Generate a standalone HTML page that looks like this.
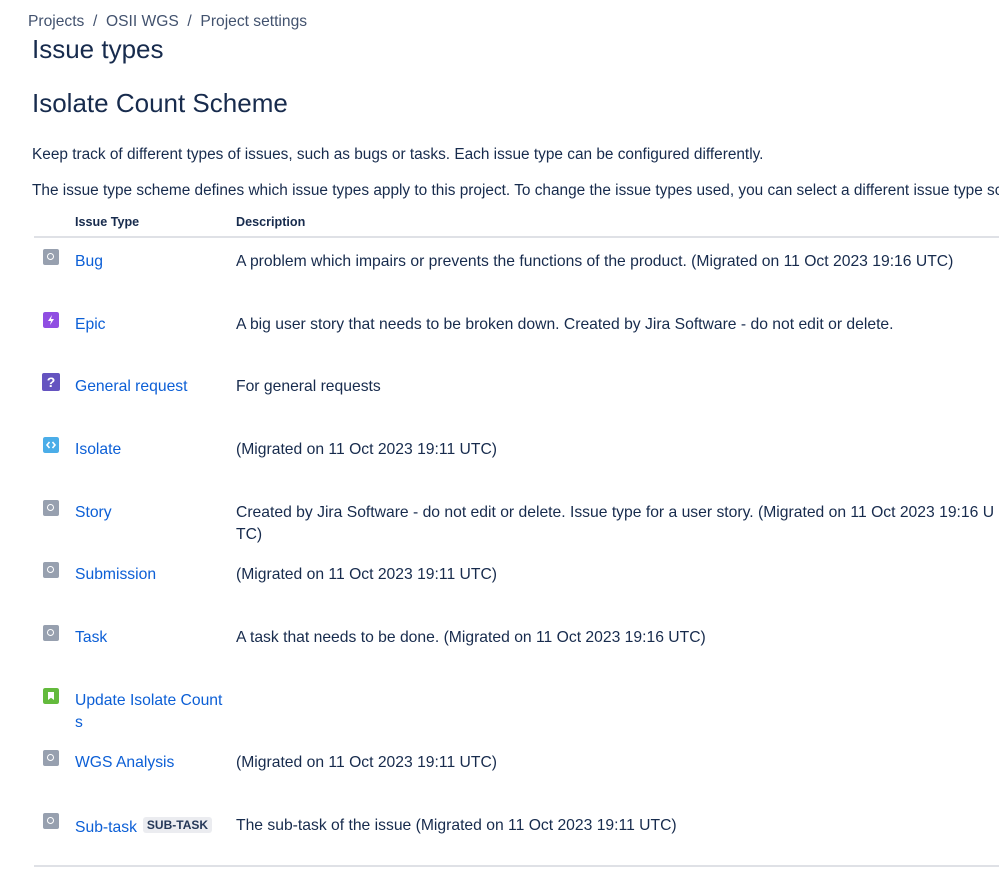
<!DOCTYPE html>
<html><head><meta charset="utf-8"><style>
body{margin:0;width:999px;height:882px;overflow:hidden;background:#fff;font-family:"Liberation Sans",sans-serif;color:#172b4d;position:relative}
.a{position:absolute;white-space:nowrap}
.bc{top:13px;left:28px;font-size:15.6px;color:#42526e}
.h1{top:34px;left:32px;font-size:26px;color:#172b4d}
.h2{top:88px;left:32px;font-size:26px;color:#172b4d}
.p{left:32px;font-size:15.4px;color:#172b4d}
.th{top:215px;font-size:12.6px;font-weight:bold;color:#172b4d}
.ln{position:absolute;left:34px;width:965px;height:2px;background:#dfe1e6}
.n{left:75px;font-size:15.7px;color:#0c5fd6}
.d{left:236px;font-size:15.7px;color:#172b4d}
.ic{position:absolute;left:43px;width:16px;height:16px;border-radius:2px}
.g{background:#97a0af}
.g::after{content:"";position:absolute;left:4px;top:4px;width:5px;height:5px;border:1.5px solid #fff;border-radius:50%}
.tag{display:inline-block;background:#ebecf0;color:#253858;font-size:12px;font-weight:bold;padding:1px 4px;border-radius:3px;margin-left:6px;vertical-align:3px}
</style></head><body>
<div class="a bc">Projects&nbsp;&nbsp;/&nbsp;&nbsp;OSII WGS&nbsp;&nbsp;/&nbsp;&nbsp;Project settings</div>
<div class="a h1">Issue types</div>
<div class="a h2">Isolate Count Scheme</div>
<div class="a p" style="top:146px">Keep track of different types of issues, such as bugs or tasks. Each issue type can be configured differently.</div>
<div class="a p" style="top:182px">The issue type scheme defines which issue types apply to this project. To change the issue types used, you can select a different issue type scheme.</div>
<div class="a th" style="left:75px">Issue Type</div>
<div class="a th" style="left:236px">Description</div>
<div class="ln" style="top:236px"></div>

<div class="ic g" style="top:249px"></div>
<div class="a n" style="top:253px">Bug</div>
<div class="a d" style="top:253px">A problem which impairs or prevents the functions of the product. (Migrated on 11 Oct 2023 19:16 UTC)</div>

<svg class="ic" style="top:312px" width="16" height="16" viewBox="0 0 16 16"><rect width="16" height="16" rx="2" fill="#904ee2"/><path d="M9 3L5 9h3l-1 4 4-6H8z" fill="#fff"/></svg>
<div class="a n" style="top:316px">Epic</div>
<div class="a d" style="top:316px">A big user story that needs to be broken down. Created by Jira Software - do not edit or delete.</div>

<div class="ic" style="top:373px;left:42px;width:18px;height:18px;background:#6554c0;color:#fff;font-weight:bold;font-size:14px;text-align:center;line-height:18px">?</div>
<div class="a n" style="top:378px">General request</div>
<div class="a d" style="top:378px">For general requests</div>

<svg class="ic" style="top:437px" width="16" height="16" viewBox="0 0 16 16"><rect width="16" height="16" rx="2" fill="#4bade8"/><path d="M6.5 5L4 8l2.5 3M9.5 5L12 8l-2.5 3" stroke="#fff" stroke-width="1.6" fill="none"/></svg>
<div class="a n" style="top:441px">Isolate</div>
<div class="a d" style="top:441px">(Migrated on 11 Oct 2023 19:11 UTC)</div>

<div class="ic g" style="top:500px"></div>
<div class="a n" style="top:504px">Story</div>
<div class="a d" style="top:504px;line-height:22px;margin-top:-2px">Created by Jira Software - do not edit or delete. Issue type for a user story. (Migrated on 11 Oct 2023 19:16 U<br>TC)</div>

<div class="ic g" style="top:562px"></div>
<div class="a n" style="top:566px">Submission</div>
<div class="a d" style="top:566px">(Migrated on 11 Oct 2023 19:11 UTC)</div>

<div class="ic g" style="top:625px"></div>
<div class="a n" style="top:629px">Task</div>
<div class="a d" style="top:629px">A task that needs to be done. (Migrated on 11 Oct 2023 19:16 UTC)</div>

<svg class="ic" style="top:688px" width="16" height="16" viewBox="0 0 16 16"><rect width="16" height="16" rx="2" fill="#63ba3c"/><path d="M5 4h6v8l-3-2.2L5 12z" fill="#fff"/></svg>
<div class="a n" style="top:692px;line-height:22px;margin-top:-2px">Update Isolate Count<br>s</div>

<div class="ic g" style="top:750px"></div>
<div class="a n" style="top:754px">WGS Analysis</div>
<div class="a d" style="top:754px">(Migrated on 11 Oct 2023 19:11 UTC)</div>

<div class="ic g" style="top:813px"></div>
<div class="a n" style="top:817px">Sub-task<span class="tag">SUB-TASK</span></div>
<div class="a d" style="top:817px">The sub-task of the issue (Migrated on 11 Oct 2023 19:11 UTC)</div>

<div class="ln" style="top:865px"></div>
</body></html>
